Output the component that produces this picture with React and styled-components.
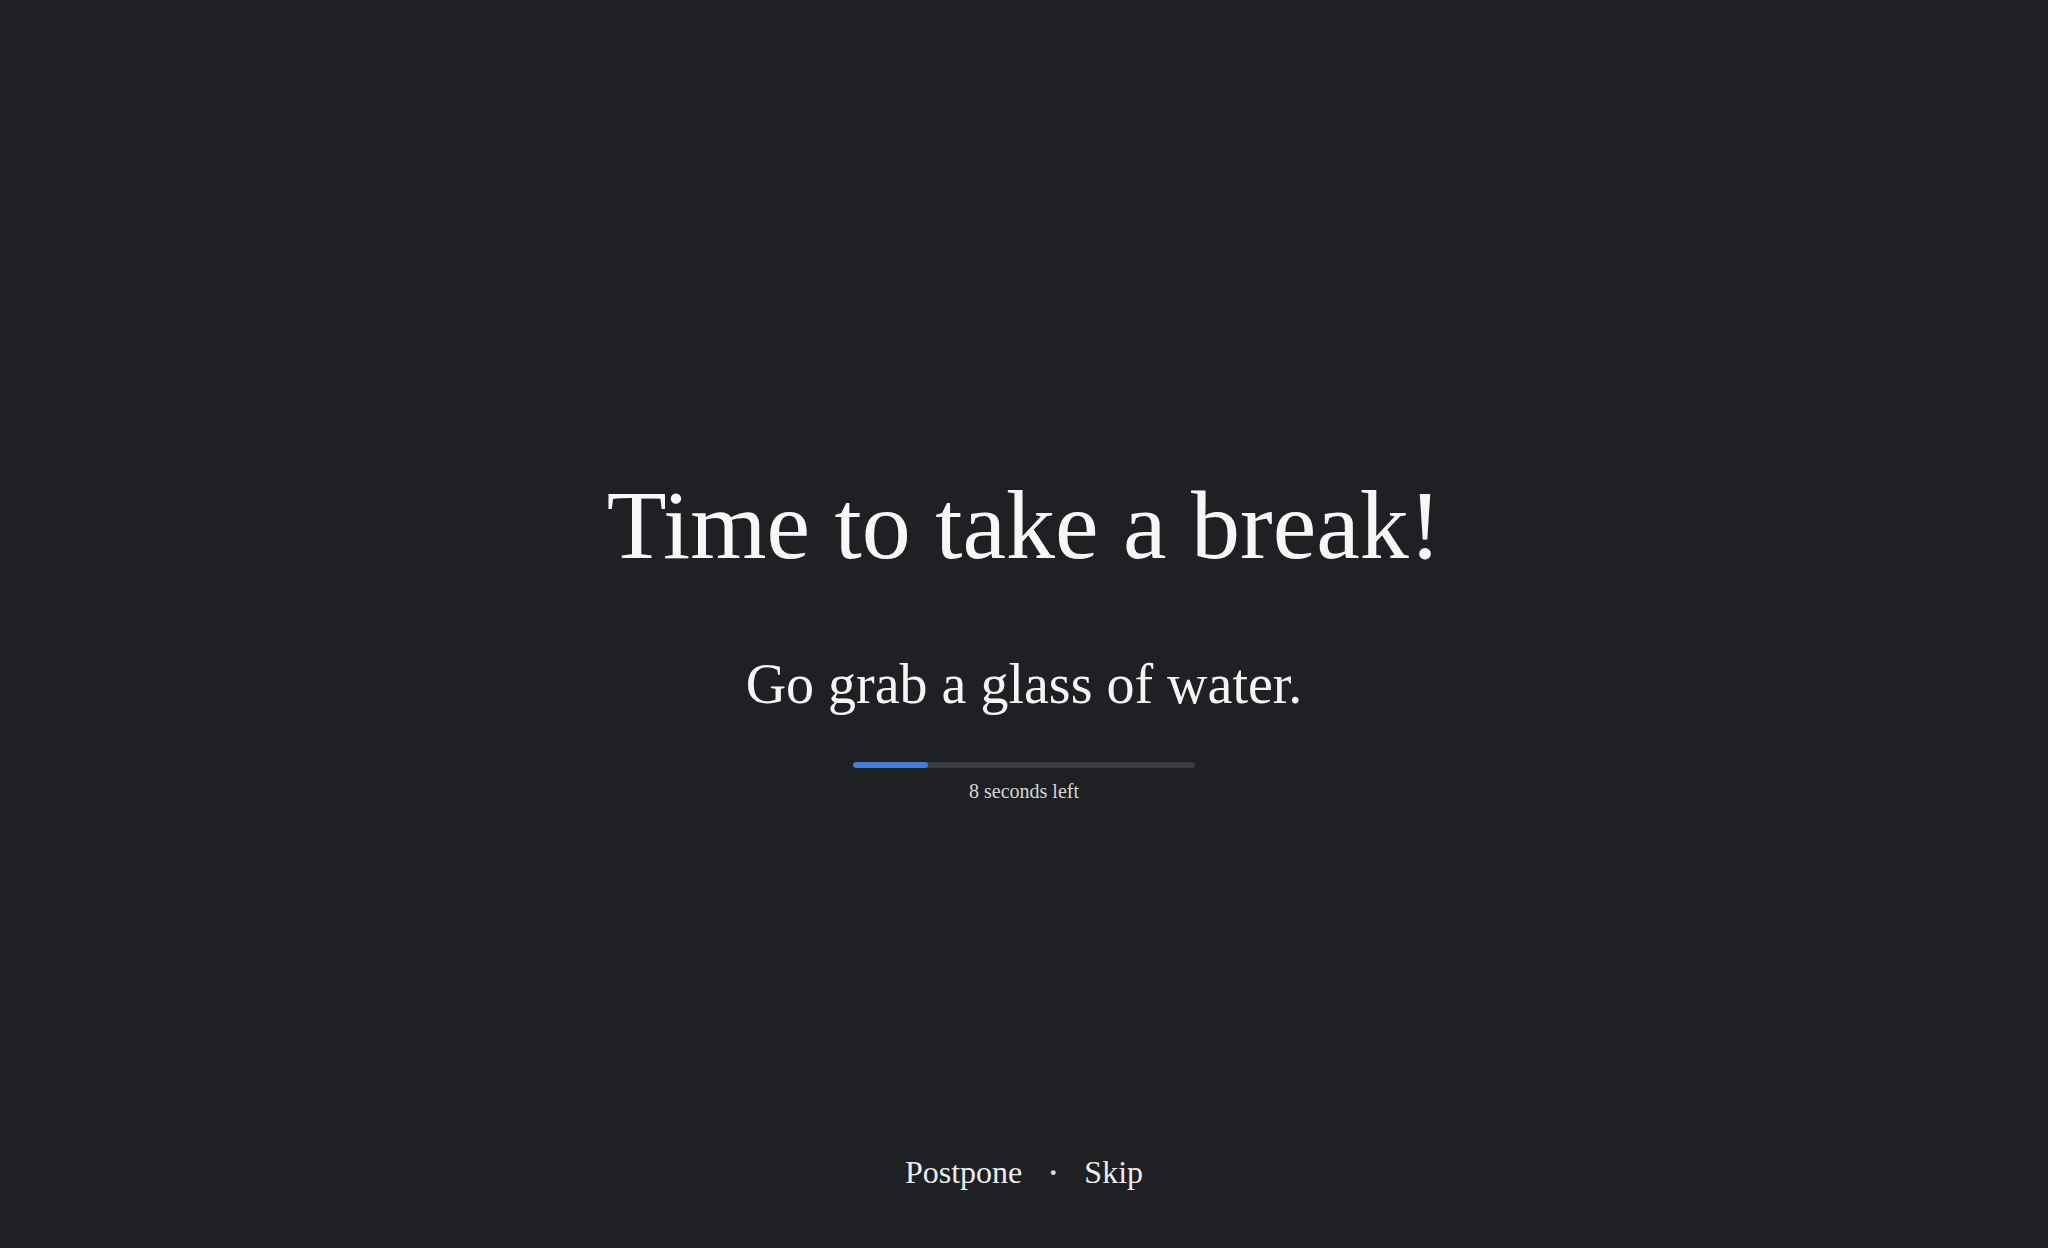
import styled, { createGlobalStyle } from 'styled-components'

const GlobalStyle = createGlobalStyle`
  html, body {
    margin: 0;
    padding: 0;
    background: #1f2024;
  }
  body {
    font-family: 'Liberation Serif', 'DejaVu Serif', serif;
    color: #f4f4f4;
  }
`

const Screen = styled.div`
  height: 100vh;
  display: flex;
  flex-direction: column;
  background: #1f2024;
`

const Content = styled.main`
  flex: 1;
  display: flex;
  flex-direction: column;
  align-items: center;
  padding-top: 467px;
`

const Title = styled.h1`
  margin: 0;
  font-size: 98px;
  font-weight: 400;
  line-height: 1.2;
  color: #f7f7f7;
`

const Message = styled.p`
  margin: 66px 0 0;
  font-size: 56px;
  line-height: 1.2;
  color: #f4f4f4;
`

const Track = styled.div`
  margin-top: 44px;
  width: 342px;
  height: 6px;
  border-radius: 3px;
  background: #3c3d41;
  overflow: hidden;
`

const Fill = styled.div`
  height: 100%;
  border-radius: 3px;
  background: #3f7fe0;
`

const Caption = styled.span`
  margin-top: 11px;
  font-size: 20px;
  line-height: 1.2;
  color: #d6d6d6;
`

const Footer = styled.footer`
  display: flex;
  justify-content: center;
  align-items: center;
  gap: 26px;
  padding-bottom: 57px;
`

const Action = styled.button`
  background: none;
  border: none;
  padding: 0;
  font-family: inherit;
  font-size: 32px;
  line-height: 1.2;
  color: #ececec;
  cursor: pointer;
`

const Dot = styled.span`
  font-size: 30px;
  font-weight: 700;
  line-height: 1;
  color: #d8d8d8;
`

export default function App() {
  const total = 10
  const left = 8
  const progress = ((total - left) / total) * 100 + 2

  return (
    <Screen>
      <GlobalStyle />
      <Content>
        <Title>Time to take a break!</Title>
        <Message>Go grab a glass of water.</Message>
        <Track>
          <Fill style={{ width: `${progress}%` }} />
        </Track>
        <Caption>{left} seconds left</Caption>
      </Content>
      <Footer>
        <Action>Postpone</Action>
        <Dot>·</Dot>
        <Action>Skip</Action>
      </Footer>
    </Screen>
  )
}
